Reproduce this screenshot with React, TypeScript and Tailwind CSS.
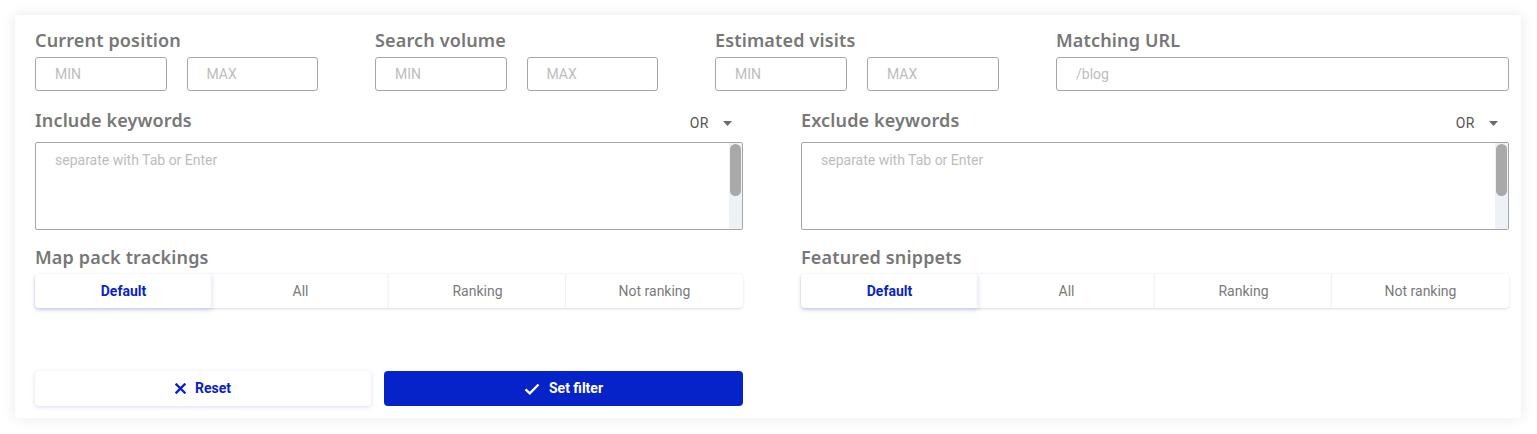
import React from "react";

const labelCls =
  "text-[18px] leading-[22px] font-semibold text-[#777777] [font-family:'Noto_Sans',sans-serif] tracking-[0.15px]";
const roboto = "[font-family:Roboto,'Liberation_Sans',sans-serif]";

function MinMax({ label }: { label: string }) {
  return (
    <div className="flex flex-col">
      <div className={labelCls}>{label}</div>
      <div className="mt-[6px] grid grid-cols-2 gap-[20px]">
        <div className={`h-[34px] border border-[#a6a6a6] rounded-[3px] flex items-center pl-[19px] text-[14px] text-[#bdbdbd] ${roboto}`}>MIN</div>
        <div className={`h-[34px] border border-[#a6a6a6] rounded-[3px] flex items-center pl-[19px] text-[14px] text-[#bdbdbd] ${roboto}`}>MAX</div>
      </div>
    </div>
  );
}

function Keywords({ label }: { label: string }) {
  return (
    <div className="flex flex-col">
      <div className="flex items-center justify-between h-[22px]">
        <div className={labelCls}>{label}</div>
        <div className={`flex items-center mr-[11px] mt-[6px] text-[14px] text-[#555] ${roboto}`}>
          <span className="tracking-[0.5px]">OR</span>
          <svg width="9" height="5" viewBox="0 0 9 5" className="ml-[14px]">
            <path d="M0 0 L9 0 L4.5 5 Z" fill="#6b6b6b" />
          </svg>
        </div>
      </div>
      <div className="mt-[11px] h-[88px] border border-[#a6a6a6] rounded-[2px] flex">
        <div className={`flex-1 pl-[19px] pt-[7px] text-[14px] text-[#bdbdbd] ${roboto}`}>separate with Tab or Enter</div>
        <div className="w-[13px] bg-[#eef1f5] flex flex-col items-center pt-[1px]">
          <div className="w-[11px] h-[52px] rounded-full bg-[#a9a9a9]" />
        </div>
      </div>
    </div>
  );
}

function Segments({ label }: { label: string }) {
  const items = ["Default", "All", "Ranking", "Not ranking"];
  return (
    <div className="flex flex-col">
      <div className={labelCls}>{label}</div>
      <div className="mt-[6px] h-[34px] flex rounded-[4px] shadow-[0_1px_3px_rgba(0,0,0,0.12)] bg-white">
        {items.map((it, i) => (
          <div
            key={it}
            className={
              i === 0
                ? `flex-1 flex items-center justify-center text-[14px] font-bold text-[#0a22c4] rounded-l-[4px] shadow-[0_2px_4px_rgba(30,50,220,0.18)] ${roboto}`
                : `flex-1 flex items-center justify-center text-[14px] text-[#7a7a7a] shadow-[-1px_0_2px_rgba(0,0,0,0.07)] ${roboto} ${i === 3 ? "rounded-r-[4px]" : ""}`
            }
          >
            {it}
          </div>
        ))}
      </div>
    </div>
  );
}

export default function App() {
  return (
    <div className="w-full h-[434px] bg-white pt-[15px] pl-[15px] pr-[16px]">
      <div className="bg-white shadow-[0_0_14px_rgba(0,0,0,0.09)] pl-[20px] pr-[12px] pt-[14px] pb-[12px] h-[403px]">
        <div className="grid grid-cols-[283px_283px_284px_1fr] gap-x-[57px]">
          <MinMax label="Current position" />
          <MinMax label="Search volume" />
          <MinMax label="Estimated visits" />
          <div className="flex flex-col">
            <div className={labelCls}>Matching URL</div>
            <div className={`mt-[6px] h-[34px] border border-[#a6a6a6] rounded-[3px] flex items-center pl-[19px] text-[14px] text-[#bdbdbd] ${roboto}`}>/blog</div>
          </div>
        </div>

        <div className="mt-[18px] grid grid-cols-2 gap-x-[58px]">
          <Keywords label="Include keywords" />
          <Keywords label="Exclude keywords" />
        </div>

        <div className="mt-[16px] grid grid-cols-2 gap-x-[58px]">
          <Segments label="Map pack trackings" />
          <Segments label="Featured snippets" />
        </div>

        <div className="mt-[63px] grid grid-cols-2 gap-x-[58px]">
          <div className="flex gap-[13px]">
            <button className={`w-[336px] h-[35px] rounded-[4px] bg-white shadow-[0_1px_4px_rgba(40,60,220,0.18)] flex items-center justify-center gap-[9px] text-[14px] font-bold text-[#0a22c4] ${roboto}`}>
              <svg width="11" height="11" viewBox="0 0 11 11">
                <path d="M1.5 1.5 L9.5 9.5 M9.5 1.5 L1.5 9.5" stroke="#0a22c4" strokeWidth="2.4" strokeLinecap="square" />
              </svg>
              Reset
            </button>
            <button className={`flex-1 h-[35px] rounded-[4px] bg-[#0622c9] flex items-center justify-center gap-[9px] text-[14px] font-bold text-white ${roboto}`}>
              <svg width="16" height="12" viewBox="0 0 16 12">
                <path d="M1.5 6.3 L5.8 10.3 L14.5 1.5" stroke="white" strokeWidth="2.3" fill="none" />
              </svg>
              Set filter
            </button>
          </div>
          <div />
        </div>
      </div>
    </div>
  );
}
